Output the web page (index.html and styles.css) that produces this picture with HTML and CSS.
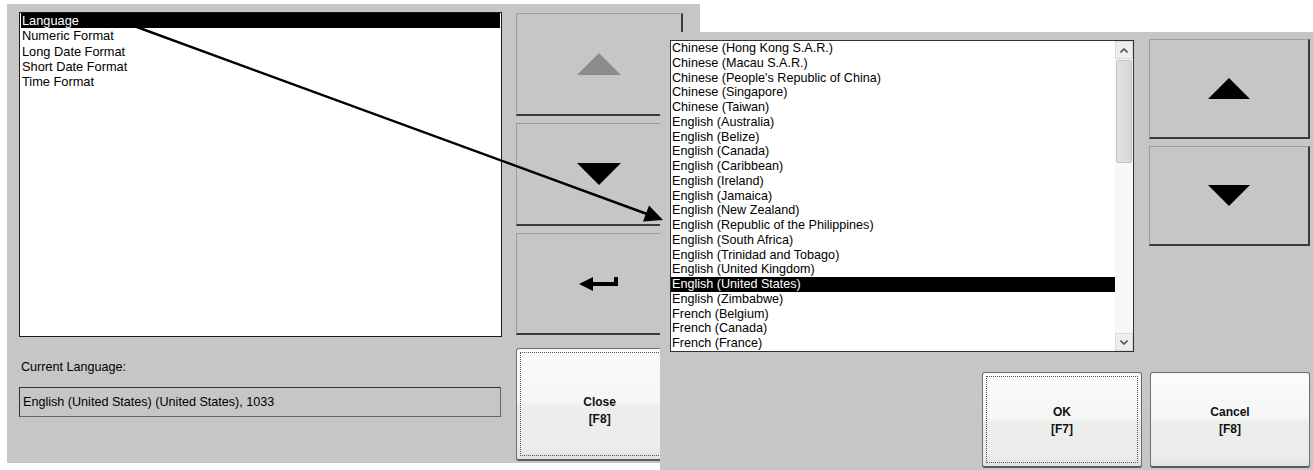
FILE: index.html
```html
<!DOCTYPE html>
<html lang="en">
<head>
  <meta charset="UTF-8" />
  <title>Regional Settings - Language</title>
  <link rel="stylesheet" href="styles.css">
</head>
<body>

  <div class="stage">

    <!-- Regional settings screen -->
    <section class="screen screen-main">
      <div class="main-col">
        <ul class="listbox settings-list">
          <li class="selected">Language</li>
          <li>Numeric Format</li>
          <li>Long Date Format</li>
          <li>Short Date Format</li>
          <li>Time Format</li>
        </ul>
        <div class="current-label">Current Language:</div>
        <div class="current-field">English (United States) (United States), 1033</div>
      </div>

      <div class="btn-col">
        <button class="sq-btn btn-up" disabled>
          <svg width="44" height="22" viewBox="0 0 44 22"><polygon points="22,0 44,22 0,22" fill="#8c8c8c"/></svg>
        </button>
        <button class="sq-btn btn-down">
          <svg width="44" height="22" viewBox="0 0 44 22"><polygon points="0,0 44,0 22,22" fill="#000"/></svg>
        </button>
        <button class="sq-btn btn-enter">
          <svg width="40" height="14" viewBox="0 0 40 14"><path d="M0 7 L14 0 L14 5 L35 5 L35 0 L39 0 L39 9 L14 9 L14 14 Z" fill="#000"/></svg>
        </button>
        <button class="cmd-btn focused btn-close"><span>Close<br>[F8]</span></button>
      </div>
    </section>

    <!-- Language picker screen -->
    <section class="screen screen-lang">
      <div class="lang-top">
        <div class="listbox lang-list">
          <ul class="lang-items">
            <li>Chinese (Hong Kong S.A.R.)</li>
            <li>Chinese (Macau S.A.R.)</li>
            <li>Chinese (People's Republic of China)</li>
            <li>Chinese (Singapore)</li>
            <li>Chinese (Taiwan)</li>
            <li>English (Australia)</li>
            <li>English (Belize)</li>
            <li>English (Canada)</li>
            <li>English (Caribbean)</li>
            <li>English (Ireland)</li>
            <li>English (Jamaica)</li>
            <li>English (New Zealand)</li>
            <li>English (Republic of the Philippines)</li>
            <li>English (South Africa)</li>
            <li>English (Trinidad and Tobago)</li>
            <li>English (United Kingdom)</li>
            <li class="selected">English (United States)</li>
            <li>English (Zimbabwe)</li>
            <li>French (Belgium)</li>
            <li>French (Canada)</li>
            <li>French (France)</li>
          </ul>
          <div class="scrollbar">
            <div class="sb-btn">
              <svg width="8" height="5" viewBox="0 0 8 5"><polyline points="0.5,4.5 4,1 7.5,4.5" fill="none" stroke="#555" stroke-width="1.6"/></svg>
            </div>
            <div class="sb-thumb"></div>
            <div class="sb-track"></div>
            <div class="sb-btn">
              <svg width="8" height="5" viewBox="0 0 8 5"><polyline points="0.5,0.5 4,4 7.5,0.5" fill="none" stroke="#555" stroke-width="1.6"/></svg>
            </div>
          </div>
        </div>

        <div class="btn-col lang-btns">
          <button class="sq-btn">
            <svg width="42" height="21" viewBox="0 0 42 21"><polygon points="21,0 42,21 0,21" fill="#000"/></svg>
          </button>
          <button class="sq-btn">
            <svg width="42" height="21" viewBox="0 0 42 21"><polygon points="0,0 42,0 21,21" fill="#000"/></svg>
          </button>
        </div>
      </div>

      <div class="lang-bottom">
        <button class="cmd-btn focused"><span>OK<br>[F7]</span></button>
        <button class="cmd-btn"><span>Cancel<br>[F8]</span></button>
      </div>
    </section>

    <!-- callout arrow from Language to the picker -->
    <svg class="callout" width="1313" height="470" viewBox="0 0 1313 470">
      <line x1="115" y1="19" x2="647" y2="214" stroke="#000" stroke-width="2.4"/>
      <polygon points="663,220 643,221.5 649,205.5" fill="#000"/>
    </svg>

  </div>

</body>
</html>
```

FILE: styles.css
```css
body, html {
  margin: 0;
  padding: 0;
  overflow: hidden;
  background: #fff;
  font-family: "Liberation Sans", Arial, sans-serif;
  color: #000;
}

.stage {
  position: relative;
  width: 1313px;
  height: 470px;
  display: flex;
  align-items: flex-start;
}

.screen {
  box-sizing: border-box;
  background: #c6c6c6;
  display: flex;
}

ul {
  list-style: none;
  margin: 0;
  padding: 0;
}

/* ---------- left screen ---------- */

.screen-main {
  width: 693px;
  height: 459px;
  margin: 4px 0 0 7px;
  padding: 8px 17px 0 12px;
  gap: 14px;
}

.main-col {
  width: 484px;
  display: flex;
  flex-direction: column;
}

.listbox {
  box-sizing: border-box;
  background: #fff;
  border: 1px solid #1c1c1c;
}

.settings-list {
  height: 325px;
  padding: 0 1px;
  font-size: 12.8px;
  line-height: 15.25px;
}

.settings-list li {
  padding-left: 1px;
  white-space: nowrap;
}

.selected {
  background: #000;
  color: #fff;
}

.current-label {
  margin-top: 22px;
  font-size: 12.6px;
  line-height: 16px;
  padding-left: 2px;
}

.current-field {
  box-sizing: border-box;
  width: 482px;
  height: 30px;
  margin-top: 12px;
  padding-left: 3px;
  border: 1px solid #333;
  border-right-color: #666;
  border-bottom-color: #666;
  font-size: 12.6px;
  line-height: 28px;
  white-space: nowrap;
}

.btn-col {
  width: 167px;
  margin-top: 1px;
  display: flex;
  flex-direction: column;
  gap: 7px;
}

.sq-btn {
  box-sizing: border-box;
  padding: 0;
  background: #c6c6c6;
  border-style: solid;
  border-width: 1px 2px 2px 1px;
  border-color: #9c9c9c #3a3a3a #3a3a3a #9c9c9c;
  display: flex;
  align-items: center;
  justify-content: center;
}

.sq-btn svg {
  display: block;
}

.btn-up,
.btn-down {
  height: 103px;
}

.btn-enter {
  height: 102px;
}

.cmd-btn {
  position: relative;
  box-sizing: border-box;
  padding: 0;
  border: 1px solid #6e6e6e;
  border-bottom: 2px solid #5a5a5a;
  border-radius: 3px;
  background: linear-gradient(#fbfbfb 0%, #f6f6f6 47%, #ededed 53%, #ececec 88%, #e2e2e2 100%);
  font-family: "Liberation Sans", Arial, sans-serif;
  font-size: 12px;
  font-weight: bold;
  line-height: 17px;
  color: #111;
  display: flex;
  align-items: center;
  justify-content: center;
}

.cmd-btn.focused::after {
  content: "";
  position: absolute;
  inset: 3px;
  border: 1px dotted #555;
}

.btn-close {
  height: 113px;
  margin-top: 6px;
  padding-top: 13px;
}

/* ---------- right screen ---------- */

.screen-lang {
  position: relative;
  width: 653px;
  height: 438px;
  margin: 32px 0 0 -40px;
  padding: 8px 3px 0 10px;
  flex-direction: column;
}

.lang-top {
  display: flex;
  gap: 15px;
}

.lang-list {
  width: 464px;
  height: 312px;
  border-color: #303030;
  display: flex;
}

.lang-items {
  flex: 1;
  font-size: 12.6px;
  line-height: 14.75px;
}

.lang-items li {
  padding-left: 1px;
  white-space: nowrap;
}

.scrollbar {
  width: 18px;
  background: #f7f7f7;
  display: flex;
  flex-direction: column;
}

.sb-btn {
  box-sizing: border-box;
  height: 18px;
  border: 1px solid #dadada;
  background: #eeeeee;
  display: flex;
  align-items: center;
  justify-content: center;
}

.sb-thumb {
  box-sizing: border-box;
  height: 103px;
  margin: 1px 1px 0;
  border: 1px solid #c4c4c4;
  border-radius: 2px;
  background: linear-gradient(90deg, #e2e2e2, #d6d6d6);
}

.sb-track {
  flex: 1;
}

.lang-btns {
  width: 161px;
  margin-top: -1px;
}

.lang-btns .sq-btn {
  height: 100px;
}

.lang-bottom {
  margin-top: 20px;
  display: flex;
  justify-content: flex-end;
  gap: 8px;
}

.lang-bottom .cmd-btn {
  width: 160px;
  height: 96px;
  padding-top: 2px;
}

/* ---------- callout ---------- */

.callout {
  position: absolute;
  top: 0;
  left: 0;
  pointer-events: none;
  z-index: 2;
}
```
